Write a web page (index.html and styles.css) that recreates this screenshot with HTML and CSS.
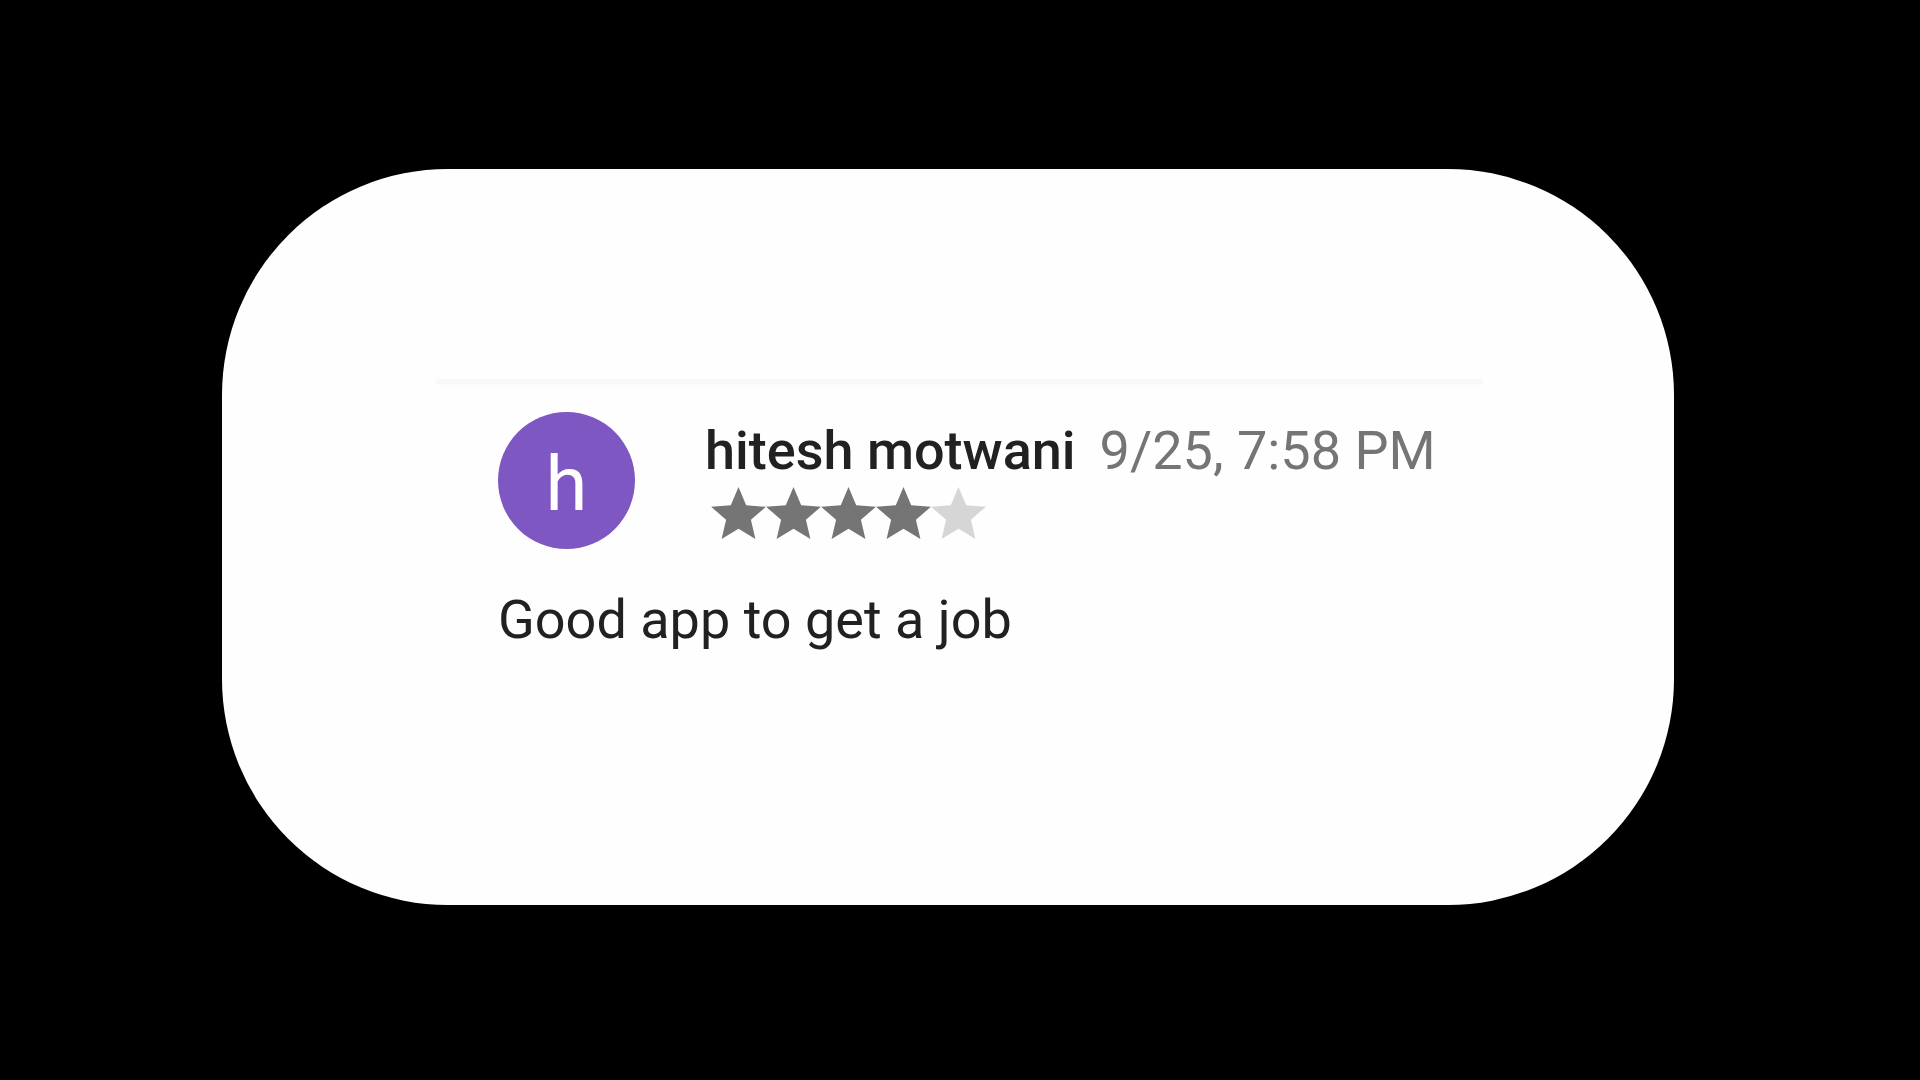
FILE: index.html
```html
<!DOCTYPE html>
<html lang="en">
<head>
    <meta charset="utf-8">
    <title>Review</title>
    <link rel="stylesheet" href="styles.css">
</head>
<body>
    <main class="card">
        <article class="review">
            <header class="review-header">
                <div class="avatar">h</div>
                <div class="info">
                    <div class="author">
                        <h1 class="name">hitesh motwani</h1>
                        <time class="date">9/25, 7:58 PM</time>
                    </div>
                    <div class="stars" role="img" aria-label="4 out of 5 stars">
                        <svg class="star" viewBox="2 2 20 19"><path d="M12 17.27L18.18 21l-1.64-7.03L22 9.24l-7.19-.61L12 2 9.19 8.63 2 9.24l5.46 4.73L5.82 21z"/></svg>
                        <svg class="star" viewBox="2 2 20 19"><path d="M12 17.27L18.18 21l-1.64-7.03L22 9.24l-7.19-.61L12 2 9.19 8.63 2 9.24l5.46 4.73L5.82 21z"/></svg>
                        <svg class="star" viewBox="2 2 20 19"><path d="M12 17.27L18.18 21l-1.64-7.03L22 9.24l-7.19-.61L12 2 9.19 8.63 2 9.24l5.46 4.73L5.82 21z"/></svg>
                        <svg class="star" viewBox="2 2 20 19"><path d="M12 17.27L18.18 21l-1.64-7.03L22 9.24l-7.19-.61L12 2 9.19 8.63 2 9.24l5.46 4.73L5.82 21z"/></svg>
                        <svg class="star empty" viewBox="2 2 20 19"><path d="M12 17.27L18.18 21l-1.64-7.03L22 9.24l-7.19-.61L12 2 9.19 8.63 2 9.24l5.46 4.73L5.82 21z"/></svg>
                    </div>
                </div>
            </header>
            <p class="comment">Good app to get a job</p>
        </article>
    </main>
</body>
</html>
```
FILE: styles.css
```css
* {
    box-sizing: border-box;
}
body {
    margin: 0;
    padding: 169px 246px 169px 222px;
    background-color: #000;
    font-family: Roboto, sans-serif;
    font-size: 54px;
    line-height: 64px;
    color: #212121;
}
.card {
    padding: 210px 191px 253px 214px;
    border-radius: 226px;
    background-color: #fefefe;
}
.review {
    padding: 33px 48px 0 62px;
    background: linear-gradient(#f8f8f8 5px, #fcfcfc 5px, #fefefe 12px);
}
.review-header {
    display: flex;
    gap: 70px;
}
.avatar {
    flex: none;
    width: 137px;
    height: 137px;
    padding-top: 8px;
    border-radius: 50%;
    background-color: #7e57c2;
    color: #fff;
    font-size: 76px;
    line-height: 129px;
    text-align: center;
}
.info {
    padding-top: 7px;
}
.author {
    display: flex;
    gap: 24px;
    white-space: nowrap;
}
.name {
    margin: 0;
    font-size: 54px;
    font-weight: 500;
}
.date {
    color: #757575;
}
.stars {
    display: flex;
    margin: 4px 0 0 6px;
}
.star {
    width: 55px;
    height: 52px;
    fill: #757575;
}
.empty {
    fill: #d6d6d6;
}
.comment {
    margin: 39px 0 0;
}
```
